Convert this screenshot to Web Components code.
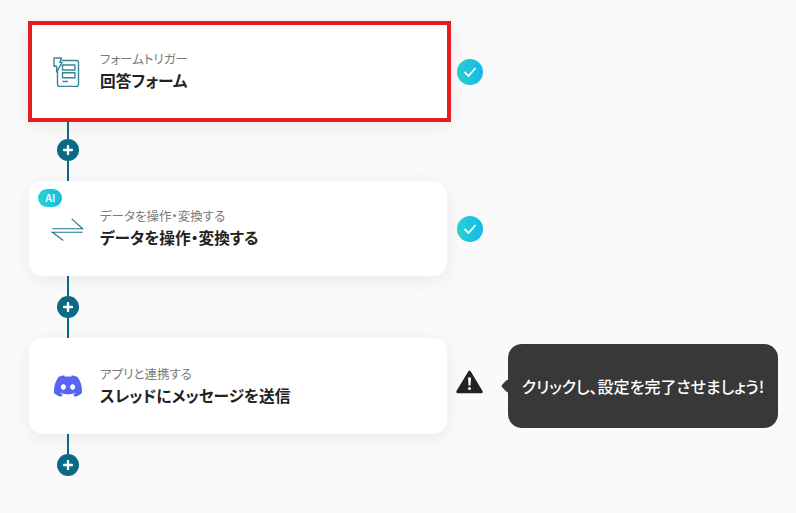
<!DOCTYPE html>
<html lang="ja">
<head>
<meta charset="utf-8">
<title>Flow</title>
<style>
  html, body { margin: 0; padding: 0; }
  body {
    background: #fafafa;
    font-family: "Noto Sans CJK JP", "Noto Sans", sans-serif;
    color: #222;
    height: 513px;
    overflow: hidden;
  }
</style>
</head>
<body>
<flow-canvas>
  <flow-row>
    <flow-card selected sub="フォームトリガー" title-text="回答フォーム">
      <svg slot="icon" width="30" height="30" viewBox="0 0 30 30" fill="none" stroke="#35869b" stroke-width="1.4" stroke-linejoin="round">
        <path d="M8.5 3.5H23.5a2 2 0 0 1 2 2V27.5a2 2 0 0 1-2 2H6.5a2 2 0 0 1-2-2V13.5"/>
        <path d="M1 1H8.4L6.8 5.4H9.2L3.6 14.8V9.2H1Z"/>
        <rect x="9.5" y="8" width="12.5" height="5"/>
        <rect x="9.5" y="15.8" width="12.5" height="5"/>
        <path d="M9.5 24.5H15" stroke-width="1.5"/>
      </svg>
    </flow-card>
    <status-check style="margin-left:6px"></status-check>
  </flow-row>
  <flow-connector before="17" after="20"></flow-connector>
  <flow-row>
    <flow-card ai sub="データを操作・変換する" title-text="データを操作・変換する">
      <svg slot="icon" width="30" height="30" viewBox="0 0 30 30" fill="none" stroke="#1f7488" stroke-width="1.1" style="overflow:visible">
        <path d="M-0.7 14.8H29.7L18.7 4.8"/>
        <path d="M29.7 18.2H-0.7L10.3 26.5"/>
      </svg>
    </flow-card>
    <status-check style="margin-left:10px"></status-check>
  </flow-row>
  <flow-connector before="20" after="20"></flow-connector>
  <flow-row>
    <flow-card sub="アプリと連携する" title-text="スレッドにメッセージを送信">
      <svg slot="icon" width="28" height="28" viewBox="0 0 24 24" fill="#5865f2">
        <path d="M20.317 4.3698a19.7913 19.7913 0 00-4.8851-1.5152.0741.0741 0 00-.0785.0371c-.211.3753-.4447.8648-.6083 1.2495-1.8447-.2762-3.68-.2762-5.4868 0-.1636-.3933-.4058-.8742-.6177-1.2495a.077.077 0 00-.0785-.037 19.7363 19.7363 0 00-4.8852 1.515.0699.0699 0 00-.0321.0277C.5334 9.0458-.319 13.5799.0992 18.0578a.0824.0824 0 00.0312.0561c2.0528 1.5076 4.0413 2.4228 5.9929 3.0294a.0777.0777 0 00.0842-.0276c.4616-.6304.8731-1.2952 1.226-1.9942a.076.076 0 00-.0416-.1057c-.6528-.2476-1.2743-.5495-1.8722-.8923a.077.077 0 01-.0076-.1277c.1258-.0943.2517-.1923.3718-.2914a.0743.0743 0 01.0776-.0105c3.9278 1.7933 8.18 1.7933 12.0614 0a.0739.0739 0 01.0785.0095c.1202.099.246.1981.3728.2924a.077.077 0 01-.0066.1276 12.2986 12.2986 0 01-1.873.8914.0766.0766 0 00-.0407.1067c.3604.698.7719 1.3628 1.225 1.9932a.076.076 0 00.0842.0286c1.961-.6067 3.9495-1.5219 6.0023-3.0294a.077.077 0 00.0313-.0552c.5004-5.177-.8382-9.6739-3.5485-13.6604a.061.061 0 00-.0312-.0286zM8.02 15.3312c-1.1825 0-2.1569-1.0857-2.1569-2.419 0-1.3332.9555-2.4189 2.157-2.4189 1.2108 0 2.1757 1.0952 2.1568 2.419 0 1.3332-.9555 2.4189-2.1569 2.4189zm7.9748 0c-1.1825 0-2.1569-1.0857-2.1569-2.419 0-1.3332.9554-2.4189 2.1569-2.4189 1.2108 0 2.1757 1.0952 2.1568 2.419 0 1.3332-.946 2.4189-2.1568 2.4189Z"/>
      </svg>
    </flow-card>
    <status-warning></status-warning>
    <flow-tooltip>クリックし、設定を完了させましょう!</flow-tooltip>
  </flow-row>
  <flow-connector before="20" after="0"></flow-connector>
</flow-canvas>

<script>
class FlowCanvas extends HTMLElement {
  constructor() {
    super();
    this.shadowDOM = this.attachShadow({ mode: 'open' });
    this.shadowDOM.innerHTML = `
      <style>
        :host {
          display: flex;
          flex-direction: column;
          align-items: flex-start;
          padding: 21px 0 0 29px;
        }
      </style>
      <slot></slot>
    `;
  }
}

class FlowRow extends HTMLElement {
  constructor() {
    super();
    this.shadowDOM = this.attachShadow({ mode: 'open' });
    this.shadowDOM.innerHTML = `
      <style>
        :host {
          display: flex;
          align-items: center;
        }
      </style>
      <slot></slot>
    `;
  }
}

class FlowCard extends HTMLElement {
  constructor() {
    super();
    this.shadowDOM = this.attachShadow({ mode: 'open' });
  }

  connectedCallback() {
    this.render();
  }

  render() {
    const ai = this.hasAttribute('ai') ? '<span id="ai">AI</span>' : '';
    this.shadowDOM.innerHTML = `
      <style>
        :host {
          display: flex;
          align-items: center;
          position: relative;
          box-sizing: border-box;
          width: 418px;
          height: 96px;
          padding-left: 24px;
          gap: 17px;
          background: #fff;
          border-radius: 14px;
          box-shadow: 0 4px 20px rgba(0, 0, 0, 0.07);
        }

        :host([ai]) {
          height: 95px;
        }

        :host([selected]) {
          width: 423px;
          height: 101px;
          margin-left: -1px;
          padding-left: 25px;
          border: 4px solid #e81c1c;
          border-radius: 0;
        }

        :host([selected]) #icon {
          margin-left: -4px;
        }

        #icon {
          display: flex;
          align-items: center;
          justify-content: center;
          width: 30px;
          height: 30px;
          flex: none;
        }

        #sub {
          font-size: 12.5px;
          line-height: 16px;
          color: #7a7a7a;
          font-feature-settings: "palt";
        }

        #title {
          margin-top: 3px;
          font-size: 15.7px;
          line-height: 22px;
          font-weight: 700;
          color: #222;
          font-feature-settings: "palt";
        }

        #ai {
          position: absolute;
          left: 9px;
          top: 8px;
          width: 24px;
          height: 18px;
          border-radius: 9px;
          background: linear-gradient(90deg, #2bd1cc, #13bde6);
          color: #fff;
          font-family: "Inter", sans-serif;
          font-size: 10px;
          font-weight: 600;
          line-height: 18px;
          text-align: center;
        }
      </style>
      ${ai}
      <div id="icon"><slot name="icon"></slot></div>
      <div>
        <div id="sub">${this.getAttribute('sub')}</div>
        <div id="title">${this.getAttribute('title-text')}</div>
      </div>
    `;
  }
}

class FlowConnector extends HTMLElement {
  constructor() {
    super();
    this.shadowDOM = this.attachShadow({ mode: 'open' });
  }

  connectedCallback() {
    const before = this.getAttribute('before');
    const after = this.getAttribute('after');
    this.shadowDOM.innerHTML = `
      <style>
        :host {
          display: flex;
          flex-direction: column;
          align-items: center;
          width: 22px;
          margin-left: 28px;
        }

        .line {
          width: 2px;
          background: #0a6a85;
        }

        #plus {
          width: 22px;
          height: 22px;
          display: flex;
          align-items: center;
          justify-content: center;
          border-radius: 50%;
          background: #0a6a85;
        }
      </style>
      <div class="line" style="height:${before}px"></div>
      <div id="plus">
        <svg width="10" height="10" viewBox="0 0 10 10" fill="none" stroke="#fff" stroke-width="2.4" stroke-linecap="round">
          <path d="M5 1V9M1 5H9"/>
        </svg>
      </div>
      <div class="line" style="height:${after}px"></div>
    `;
  }
}

class StatusCheck extends HTMLElement {
  constructor() {
    super();
    this.shadowDOM = this.attachShadow({ mode: 'open' });
    this.shadowDOM.innerHTML = `
      <style>
        :host {
          display: flex;
          align-items: center;
          justify-content: center;
          width: 26px;
          height: 26px;
          border-radius: 50%;
          background: linear-gradient(90deg, #2bd1cc, #13b8ec);
        }
      </style>
      <svg width="14" height="12" viewBox="0 0 14 12" fill="none" stroke="#fff" stroke-width="1.8">
        <path d="M1.5 6L5.5 10L12.5 2"/>
      </svg>
    `;
  }
}

class StatusWarning extends HTMLElement {
  constructor() {
    super();
    this.shadowDOM = this.attachShadow({ mode: 'open' });
    this.shadowDOM.innerHTML = `
      <style>
        :host {
          display: block;
          width: 27px;
          height: 24px;
          margin: 0 0 8px 9px;
        }
      </style>
      <svg width="27" height="24" viewBox="0 0 27 24">
        <path d="M13.5 2.2L25.2 21.8H1.8Z" fill="#222" stroke="#222" stroke-width="3" stroke-linejoin="round"/>
        <path d="M12 7.5H15L14.5 15.5H12.5Z" fill="#fff"/>
        <circle cx="13.5" cy="18.6" r="1.5" fill="#fff"/>
      </svg>
    `;
  }
}

class FlowTooltip extends HTMLElement {
  constructor() {
    super();
    this.shadowDOM = this.attachShadow({ mode: 'open' });
    this.shadowDOM.innerHTML = `
      <style>
        :host {
          display: flex;
          align-items: center;
          justify-content: center;
          position: relative;
          width: 270px;
          height: 84px;
          margin-left: 25px;
          border-radius: 14px;
          background: #383838;
          color: #fff;
          font-size: 16px;
          font-weight: 500;
          white-space: nowrap;
          font-feature-settings: "palt";
        }

        :host::before {
          content: "";
          position: absolute;
          left: -5px;
          top: 37px;
          width: 10px;
          height: 10px;
          background: #383838;
          transform: rotate(45deg);
          border-radius: 2px;
        }
      </style>
      <slot></slot>
    `;
  }
}

customElements.define('flow-canvas', FlowCanvas);
customElements.define('flow-row', FlowRow);
customElements.define('flow-card', FlowCard);
customElements.define('flow-connector', FlowConnector);
customElements.define('status-check', StatusCheck);
customElements.define('status-warning', StatusWarning);
customElements.define('flow-tooltip', FlowTooltip);
</script>
</body>
</html>
